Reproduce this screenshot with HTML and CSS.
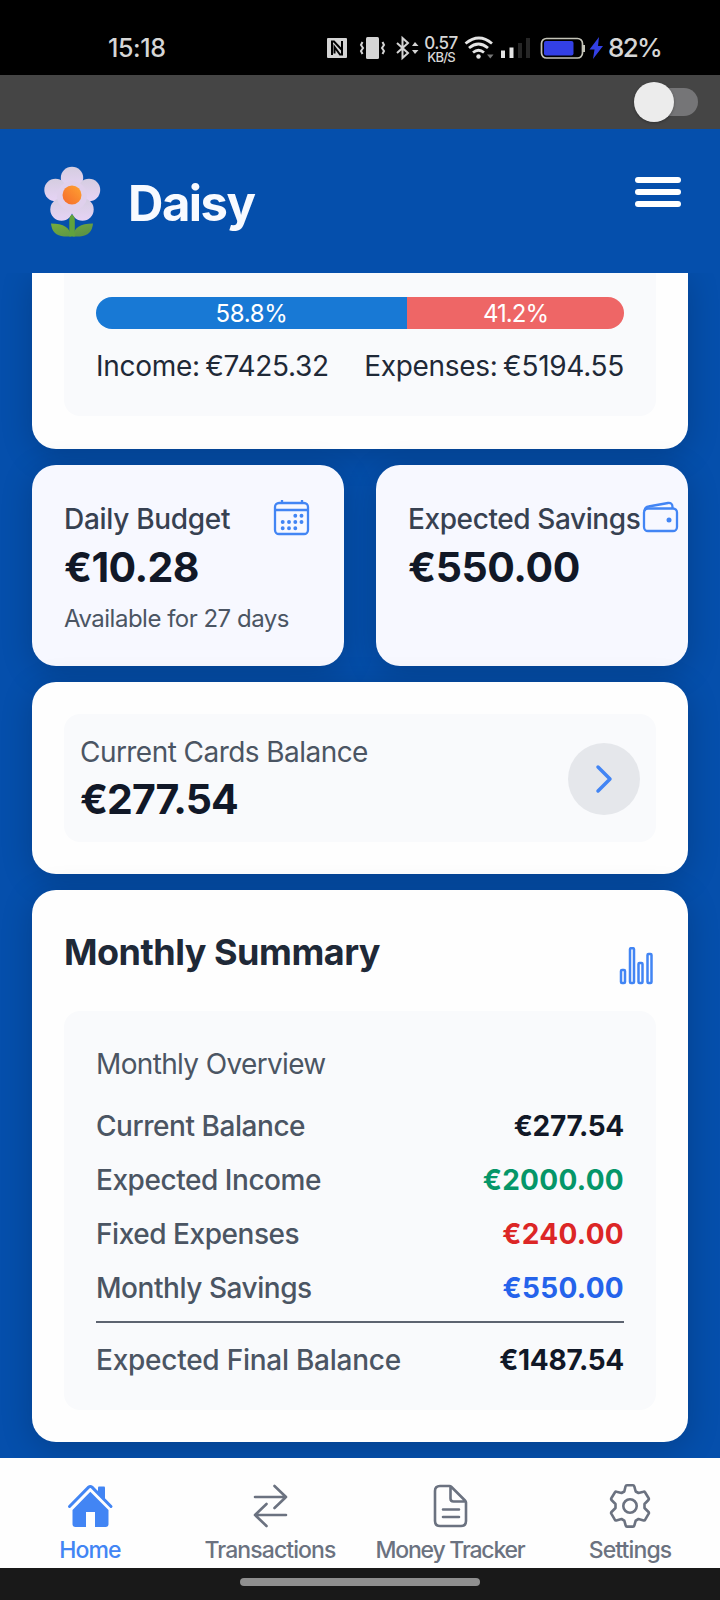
FILE: index.html
```html
<!DOCTYPE html>
<html lang="en">
<head>
<meta charset="utf-8">
<title>Daisy</title>
<link rel="stylesheet" href="styles.css">
</head>
<body>
<div class="screen">
  <div class="status">
    <span class="clock">15:18</span>
    <svg class="status-icons" width="98" height="28" viewBox="324 34 98 28">
      <rect x="327" y="38" width="20" height="20" rx="1" fill="#d4d4d4"/>
      <path d="M332 55V41.500h2L342 50M342 41v13.500h-2L334.500 47v6.500" fill="none" stroke="#000" stroke-width="2"/>
      <rect x="366" y="37" width="13" height="22" rx="1.500" fill="#d4d4d4"/>
      <path d="M362.500 42l-1.500 3 2 3-2 3 1.500 3M382.500 42l1.500 3-2 3 2 3-1.500 3" fill="none" stroke="#d4d4d4" stroke-width="2"/>
      <path d="M397 43l11 10-5.500 5V38l5.500 5-11 10" fill="none" stroke="#d4d4d4" stroke-width="2"/>
      <path d="M412 46l3-4 3.500 4zM412 50h6.500l-3.500 4z" fill="#d4d4d4"/>
    </svg>
    <span class="speed"><b>0.57</b><i>KB/S</i></span>
    <svg class="signal" width="145" height="28" viewBox="462 34 145 28">
      <g fill="none" stroke="#e4e4e4" stroke-width="2.800"><path d="M465.500 43.500q13.500-11 26.500 0M469 48q9.500-8 19 0M473 52.500q5.500-4.500 11 0"/></g>
      <circle cx="478.500" cy="56.500" r="2.200" fill="#e4e4e4"/>
      <path d="M487 54.500h6.500l-3.200 4z" fill="#777"/>
      <path d="M501 50.500h4V58h-4zM509.500 47.500h4V58h-4z" fill="#e4e4e4"/>
      <path d="M518 43h4v15h-4zM526 38h4v20h-4z" fill="#262626"/>
      <rect x="541.500" y="38.500" width="41" height="19.500" rx="5" fill="none" stroke="#c4c4b8" stroke-width="1.700"/>
      <rect x="544" y="41" width="29.500" height="14.500" rx="2" fill="#3340e6"/>
      <path d="M584 45v7" stroke="#c4c4b8" stroke-width="2"/>
      <path d="M599 37l-9.500 12.500h5L593 59l10-13h-5z" fill="#3340e6"/>
    </svg>
    <span class="percent">82%</span>
  </div>
  <div class="switch-bar"><span class="switch"><span class="knob"></span></span></div>
  <header class="header">
    <svg class="flower" width="58" height="72" viewBox="0 0 58 72">
      <defs>
        <linearGradient id="petal" x1="0" y1="0" x2="0" y2="1"><stop offset="0" stop-color="#d5cde0"/><stop offset="1" stop-color="#e6d3f5"/></linearGradient>
        <linearGradient id="core" x1="1" y1="0" x2="0" y2="1"><stop offset="0" stop-color="#ffa331"/><stop offset="1" stop-color="#f5692c"/></linearGradient>
        <linearGradient id="leaf" x1="0" y1="0" x2="1" y2="1"><stop offset="0" stop-color="#77ad3c"/><stop offset="1" stop-color="#568f48"/></linearGradient>
      </defs>
      <path d="M8 57.500q19 0 20 13h-7q-12-1-13-13zM50 57.500q-19 0-20 13h7q12-1 13-13z" fill="url(#leaf)"/>
      <g fill="url(#petal)"><circle cx="29" cy="12" r="11.200"/><circle cx="12.500" cy="24" r="11.200"/><circle cx="46" cy="24" r="11.200"/><circle cx="18.500" cy="43.500" r="11.200"/><circle cx="39.500" cy="43.500" r="11.200"/></g>
      <circle cx="29" cy="30" r="15" fill="#dfd0ec"/>
      <path d="M26.300 70.500V54q0-4 2.700-5.500 2.800 1.500 2.800 5.500v16.500z" fill="#61a33d"/>
      <circle cx="29" cy="29" r="9.500" fill="url(#core)"/>
    </svg>
    <h1 class="brand">Daisy</h1>
    <span class="menu"><span></span><span></span><span></span></span>
  </header>
  <main class="content">
    <section class="card ratio-card">
      <div class="panel ratio">
        <div class="bar"><span class="bar-income" style="width:58.9%">58.8%</span><span class="bar-expense">41.2%</span></div>
        <div class="totals"><span>Income: €7425.32</span><span>Expenses: €5194.55</span></div>
      </div>
    </section>
    <div class="pair">
      <section class="card tile">
        <div class="tile-head"><span>Daily Budget</span>
          <svg class="calendar" width="38" height="38" viewBox="0 0 38 38" fill="none" stroke="#4285f4" stroke-width="2.300"><rect x="2" y="4" width="33" height="31" rx="4"/><path d="M2 11h33M9 1v3M29 1v3"/><path d="M22.300 16.800h.01M28.500 16.800h.01M9.700 23h.01M16 23h.01M22.300 23h.01M28.500 23h.01M9.700 29.200h.01M16 29.200h.01M22.300 29.200h.01" stroke-width="3.900" stroke-linecap="round"/></svg>
        </div>
        <strong class="amount ten">€10.28</strong>
        <span class="note">Available for 27 days</span>
      </section>
      <section class="card tile">
        <div class="tile-head savings"><span>Expected Savings</span>
          <svg class="wallet" width="38" height="38" viewBox="0 0 38 38" fill="none" stroke="#4285f4" stroke-width="2.300"><rect x="2" y="8.500" width="33" height="22.500" rx="4"/><path d="M2.500 11Q3 7 6.500 6.500L26 3q4.500-.5 4.500 4v1.500"/><circle cx="27" cy="20" r="2.500" fill="#4285f4" stroke="none"/></svg>
        </div>
        <strong class="amount wide">€550.00</strong>
      </section>
    </div>
    <section class="card">
      <div class="panel cards-balance">
        <div><span class="balance-label">Current Cards Balance</span><strong class="amount">€277.54</strong></div>
        <span class="go"><svg width="72" height="72" viewBox="0 0 72 72"><path d="M30 24l12 12-12 12" fill="none" stroke="#4285f4" stroke-width="3.500" stroke-linecap="round" stroke-linejoin="round"/></svg></span>
      </div>
    </section>
    <section class="card summary">
      <div class="summary-head"><h2>Monthly Summary</h2>
        <svg class="chart" width="36" height="40" viewBox="0 0 36 40" fill="none" stroke="#4285f4" stroke-width="2.500"><rect x="2" y="23" width="4" height="13" rx="1"/><rect x="11" y="1.200" width="4" height="34.800" rx="1"/><rect x="19.500" y="16" width="4" height="20" rx="1"/><rect x="28.500" y="7" width="4" height="29" rx="1"/></svg>
      </div>
      <div class="panel overview">
        <h3>Monthly Overview</h3>
        <div class="row"><span>Current Balance</span><b>€277.54</b></div>
        <div class="row"><span>Expected Income</span><b class="wide green">€2000.00</b></div>
        <div class="row"><span>Fixed Expenses</span><b class="wide red">€240.00</b></div>
        <div class="row"><span>Monthly Savings</span><b class="wide blue">€550.00</b></div>
        <div class="row final"><span>Expected Final Balance</span><b>€1487.54</b></div>
      </div>
    </section>
  </main>
  <nav class="tabs">
    <a class="tab active"><svg width="48" height="48" viewBox="0 0 48 48" fill="#4285f4"><path d="M32 5.500q0-1 1-1h5q1 0 1 1v14L32 12z"/><path d="M3.500 24.500L22.600 5.200q1.700-1.500 3.400 0l19 19.300" fill="none" stroke="#4285f4" stroke-width="3" stroke-linecap="round"/><path d="M24.300 9.800L42.500 28v14q0 3-3 3H29V30H20v15H9.500q-3 0-3-3V28z"/></svg><span>Home</span></a>
    <a class="tab"><svg width="48" height="48" viewBox="0 0 48 48" fill="none" stroke="#6b7280" stroke-width="2.600" stroke-linecap="round" stroke-linejoin="round"><path d="M9 15h31M28.500 4L40 15 28.500 26M40 33H9M20.500 22L9 33l11.500 11"/></svg><span>Transactions</span></a>
    <a class="tab"><svg width="48" height="48" viewBox="0 0 48 48" fill="none" stroke="#6b7280" stroke-width="2.600" stroke-linecap="round" stroke-linejoin="round"><path d="M14 4h9.500q1 0 2 1L39 18.500q1 1 1 2V39q0 5-5 5H14q-5 0-5-5V9q0-5 5-5zM24.500 4.500v12q0 3 3 3h12M17 27.500h16M17 35h16"/></svg><span class="tight">Money Tracker</span></a>
    <a class="tab"><svg width="48" height="48" viewBox="0 0 48 48" fill="none" stroke="#6b7280" stroke-width="2.600" stroke-linejoin="round"><circle cx="24" cy="24" r="6.700"/><path d="M19.500 4.500Q19.800 3.300 21 3.300h6q1 0 1.300 1l1.400 5.200 2.800 1.500 5-1.300q1-.3 1.500.6l3.700 6q.5 1-.3 1.700L38.500 22v4l4 4q.7.700.2 1.700l-3.500 6q-.5 1-1.500.7l-5.200-1.400-2.800 1.600-1.400 5q-.3 1-1.300 1h-6q-1 0-1.300-1l-1.400-5-2.800-1.600-5.200 1.400q-1 .3-1.500-.7l-3.500-6q-.5-1 .2-1.700L9.500 26v-4l-4-4q-.7-.700-.2-1.700l3.700-6q.5-.9 1.500-.6l5 1.300 2.800-1.500z"/></svg><span>Settings</span></a>
  </nav>
  <div class="gesture"><span></span></div>
</div>
</body>
</html>
```
FILE: styles.css
```css
* { box-sizing: border-box; }
body { margin: 0; font-family: Inter, "Liberation Sans", sans-serif; }
h1, h2, h3 { margin: 0; }
svg { display: block; flex: none; }
span, b, strong { white-space: nowrap; }
.screen { width: 720px; height: 1600px; overflow: hidden; display: flex; flex-direction: column; background: #054fac; }
.status { height: 75px; flex: none; background: #000; color: #d6d6d6; display: flex; align-items: center; padding: 21px 0 0 108px; }
.status > * { flex: none; }
.clock { width: 216px; font-size: 25px; line-height: 28px; font-weight: 450; letter-spacing: -.4px; }
.speed { width: 40px; display: flex; flex-direction: column; align-items: center; margin-left: -1px; margin-right: 1px; }
.speed b { font-size: 17px; line-height: 17px; font-weight: 500; letter-spacing: -.5px; padding-top: 2px; }
.speed i { font-size: 13px; line-height: 11px; font-style: normal; font-weight: 500; letter-spacing: -.8px; }
.percent { font-size: 26px; line-height: 28px; letter-spacing: -1.700px; font-weight: 450; margin-left: 1px; }
.switch-bar { height: 54px; flex: none; background: #454545; padding: 13px 22.500px 0 0; display: flex; justify-content: flex-end; }
.switch { width: 60px; height: 28px; border-radius: 14px; background: #757577; display: flex; align-items: center; }
.knob { width: 40px; height: 40px; border-radius: 50%; background: #ececec; margin-left: -4px; flex: none; box-shadow: 0 1px 3px rgba(0,0,0,.3); }
.header { height: 144px; flex: none; padding: 0 39px 0 43px; display: flex; align-items: center; background: #054fac; position: relative; z-index: 1; }
.flower { margin: 2px 27px 0 0; }
.brand { color: #f8faff; font-size: 49px; line-height: 56px; font-weight: 700; letter-spacing: -1.500px; margin-top: 5px; }
.menu { width: 46px; margin: -18px 0 0 auto; display: flex; flex-direction: column; gap: 6px; }
.menu span { height: 6px; border-radius: 3px; background: #fff; }
.content { flex: none; height: 1185px; padding: 0 32px; display: flex; flex-direction: column; gap: 16px; }
.card { background: #fefefe; border-radius: 24px; padding: 32px; box-shadow: 0 6px 32px rgba(0,0,0,.19); flex: none; }
.panel { background: #f9fafc; border-radius: 16px; }
.ratio-card { height: 175.500px; border-radius: 0 0 24px 24px; padding-top: 0; }
.ratio { height: 143px; border-radius: 0 0 16px 16px; padding: 23.500px 32px 0; }
.bar { height: 32px; border-radius: 16px; overflow: hidden; display: flex; color: #fff; font-size: 24px; line-height: 33px; text-align: center; }
.bar-income { background: #1879d5; letter-spacing: -.3px; }
.bar-expense { flex: 1; background: #ee6666; letter-spacing: -1px; }
.totals { display: flex; justify-content: space-between; margin-top: 17.500px; color: #1f2937; font-size: 28px; line-height: 40px; letter-spacing: -.3px; word-spacing: -2px; }
.pair { display: flex; gap: 32px; height: 201.500px; flex: none; }
.tile { flex: 1 1 0; min-width: 0; background: #f7f8ff; }
.tile-head { height: 44px; display: flex; justify-content: space-between; align-items: center; color: #374151; font-size: 28px; font-weight: 450; line-height: 40px; letter-spacing: -.3px; }
.savings { letter-spacing: -.4px; }
.calendar { margin: -2px 1px 0 0; }
.wallet { margin-left: 2px; }
.amount { display: block; color: #111827; font-size: 41px; line-height: 52px; font-weight: 700; letter-spacing: -1px; }
.amount.ten { letter-spacing: -.6px; }
.amount.wide { letter-spacing: -.4px; }
.note { display: block; color: #4b5563; font-size: 24px; line-height: 32px; margin-top: 10px; letter-spacing: -.5px; }
.cards-balance { height: 128px; padding: 17px 16px 15px; display: flex; justify-content: space-between; align-items: center; }
.balance-label { display: block; color: #4b5563; font-size: 28px; line-height: 40px; letter-spacing: -.55px; }
.cards-balance .amount { line-height: 54px; }
.go { width: 72px; height: 72px; border-radius: 50%; background: #e5e7eb; }
.summary { height: 552px; }
.summary-head { height: 89px; display: flex; justify-content: space-between; align-items: flex-start; }
.summary-head h2 { color: #1f2937; font-size: 36px; line-height: 44px; font-weight: 700; margin-top: 8px; letter-spacing: -.5px; }
.chart { margin: 25px 1px 0 0; }
.overview { height: 399px; padding: 33px 32px 0; }
.overview h3 { color: #4b5563; font-size: 28px; font-weight: 400; line-height: 40px; margin-bottom: 15px; letter-spacing: -.65px; }
.row { height: 54px; display: flex; justify-content: space-between; align-items: center; color: #4b5563; font-size: 28px; line-height: 40px; font-weight: 450; letter-spacing: -.45px; }
.row b { font-weight: 700; color: #111827; letter-spacing: -.3px; }
.row b.wide { letter-spacing: .3px; }
.row .green { color: #059669; }
.row .red { color: #dc2626; }
.row .blue { color: #2563eb; }
.row.final { border-top: 2px solid #5d6470; margin-top: 6px; height: 75px; }
.row.final span { letter-spacing: -.25px; }
.tabs { height: 110px; flex: none; background: #fefefe; display: grid; grid-template-columns: repeat(4, 180px); position: relative; z-index: 1; }
.tab { display: flex; flex-direction: column; align-items: center; padding-top: 24px; color: #6b7280; font-size: 23px; line-height: 30px; font-weight: 450; letter-spacing: -.9px; }
.tab span { margin-top: 4.500px; }
.tab .tight { letter-spacing: -1.200px; }
.tab.active { color: #4285f4; }
.gesture { height: 32px; flex: none; background: #191919; padding-top: 10px; }
.gesture span { display: block; width: 240px; height: 8px; border-radius: 4px; background: #8f8f8f; margin: 0 auto; }
```
